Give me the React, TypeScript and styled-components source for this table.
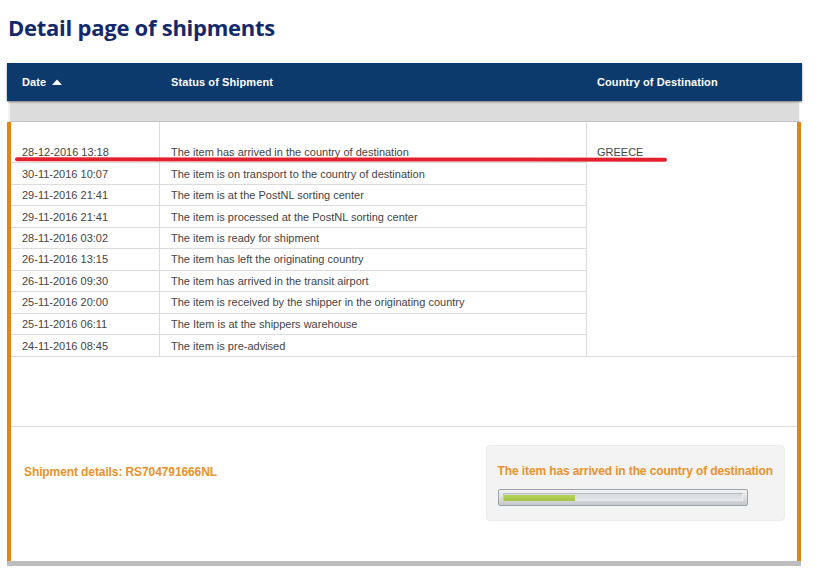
import React from 'react';
import styled, { createGlobalStyle } from 'styled-components';

const GlobalStyle = createGlobalStyle`
  html, body { margin: 0; padding: 0; background: #ffffff; }
  body { font-family: "Liberation Sans", Arial, sans-serif; }
  * { box-sizing: border-box; }
`;

const Page = styled.div`
  width: 815px;
  height: 579px;
  padding: 12px 0 0 7px;
  overflow: hidden;
`;

const Title = styled.h1`
  margin: 0 0 21px 1px;
  font-family: "Open Sans", "Noto Sans", sans-serif;
  font-weight: 700;
  font-size: 22px;
  line-height: 30px;
  color: #14296b;
  letter-spacing: -0.25px;
`;

const Frame = styled.div`
  width: 795px;
  display: flex;
  flex-direction: column;
`;

const HeaderBar = styled.div`
  display: grid;
  grid-template-columns: 152px 427px 1fr;
  align-items: center;
  height: 38px;
  background: #0c3a6c;
  box-shadow: 0 1px 2px rgba(0, 0, 0, 0.45);
  position: relative;
  z-index: 1;
`;

const HeaderCell = styled.div<{ $pad: number }>`
  display: flex;
  align-items: center;
  gap: 6px;
  padding-left: ${(p) => p.$pad}px;
  color: #ffffff;
  font-weight: 700;
  font-size: 11px;
  letter-spacing: 0.1px;
`;

const SortIcon = styled.svg`
  width: 10px;
  height: 6px;
  display: block;
`;

const Band = styled.div`
  height: 21px;
  margin: 0 2px 0 1px;
  background: #dcdcdc;
  border-left: 2px solid #f3f3f3;
  border-right: 1px solid #f6f6f6;
  border-bottom: 1px solid #c2c2c2;
`;

const Panel = styled.div`
  position: relative;
  width: 794px;
  border-left: 4px solid #e5831b;
  border-right: 4px solid #e5831b;
  display: flex;
  flex-direction: column;
`;

const TableBody = styled.div`
  display: flex;
  border-bottom: 1px solid #dcdcdc;
`;

const LeftColumns = styled.div`
  width: 575px;
  display: flex;
  flex-direction: column;
`;

const Row = styled.div<{ $spacer?: boolean }>`
  display: grid;
  grid-template-columns: 148px 1fr;
  height: ${(p) => (p.$spacer ? '20px' : '21.45px')};
  border-bottom: ${(p) => (p.$spacer ? 'none' : '1px solid #dcdcdc')};
  &:last-child { border-bottom: none; }
`;

const DateCell = styled.div`
  display: flex;
  align-items: center;
  padding-left: 11px;
  font-size: 11px;
  color: #444444;
  white-space: nowrap;
`;

const StatusCell = styled(DateCell)`
  border-left: 1px solid #dcdcdc;
`;

const CountryCell = styled.div`
  flex: 1;
  border-left: 1px solid #dcdcdc;
  padding: 20px 0 0 10px;
  font-size: 11px;
  color: #444444;
`;

const CountryText = styled.div`
  height: 20.5px;
  display: flex;
  align-items: center;
`;

const EmptyArea = styled.div`
  height: 70px;
  border-bottom: 1px solid #dcdcdc;
`;

const Details = styled.div`
  height: 134px;
  display: flex;
  justify-content: space-between;
  align-items: flex-start;
  padding: 18px 12px 0 13px;
`;

const ShipmentLabel = styled.div`
  margin-top: 20px;
  color: #e8922b;
  font-weight: 700;
  font-size: 12px;
  line-height: 14px;
  letter-spacing: -0.1px;
`;

const StatusBox = styled.div`
  border: 1px solid #ececec;
  border-radius: 4px;
  background: #f3f3f3;
  padding: 18px 11px 14px 11px;
`;

const StatusText = styled.div`
  color: #e8922b;
  font-weight: 700;
  font-size: 12px;
  line-height: 14px;
  letter-spacing: -0.12px;
  margin-bottom: 11px;
  white-space: nowrap;
`;

const Track = styled.div`
  width: 250px;
  height: 17px;
  border: 1px solid #9ea3a8;
  border-radius: 2px;
  background: linear-gradient(to bottom, #f2f3f4 0%, #d9dcdf 60%, #c4c8cc 100%);
  padding: 3px 4px 0 4px;
`;

const TrackInner = styled.div`
  height: 8px;
  border-top: 1px solid #b7bbbf;
  border-left: 1px solid #c3c6c9;
  border-right: 1px solid #eef0f1;
  background: linear-gradient(to bottom, #d9dcdf 0%, #e6e8ea 100%);
  padding-top: 1px;
`;

const Fill = styled.div`
  height: 6px;
  background: linear-gradient(to bottom, #b4d35a 0%, #a4c243 100%);
`;

const BottomBar = styled.div`
  width: 794px;
  height: 5px;
  background: #bdbdbd;
`;

const Annotation = styled.svg`
  position: absolute;
  left: 3px;
  top: 33px;
  width: 654px;
  height: 8px;
  pointer-events: none;
`;

const events: [string, string][] = [
  ['28-12-2016 13:18', 'The item has arrived in the country of destination'],
  ['30-11-2016 10:07', 'The item is on transport to the country of destination'],
  ['29-11-2016 21:41', 'The item is at the PostNL sorting center'],
  ['29-11-2016 21:41', 'The item is processed at the PostNL sorting center'],
  ['28-11-2016 03:02', 'The item is ready for shipment'],
  ['26-11-2016 13:15', 'The item has left the originating country'],
  ['26-11-2016 09:30', 'The item has arrived in the transit airport'],
  ['25-11-2016 20:00', 'The item is received by the shipper in the originating country'],
  ['25-11-2016 06:11', 'The Item is at the shippers warehouse'],
  ['24-11-2016 08:45', 'The item is pre-advised'],
];

export default function App() {
  const progress = 30;
  return (
    <Page>
      <GlobalStyle />
      <Title>Detail page of shipments</Title>
      <Frame>
        <HeaderBar>
          <HeaderCell $pad={15}>
            Date
            <SortIcon viewBox="0 0 10 6">
              <polygon points="0,6 5,0.5 10,6" fill="#ffffff" />
            </SortIcon>
          </HeaderCell>
          <HeaderCell $pad={12}>Status of Shipment</HeaderCell>
          <HeaderCell $pad={11}>Country of Destination</HeaderCell>
        </HeaderBar>
        <Band />
        <Panel>
          <TableBody>
            <LeftColumns>
              <Row $spacer>
                <DateCell />
                <StatusCell />
              </Row>
              {events.map(([date, status], i) => (
                <Row key={i}>
                  <DateCell>{date}</DateCell>
                  <StatusCell>{status}</StatusCell>
                </Row>
              ))}
            </LeftColumns>
            <CountryCell>
              <CountryText>GREECE</CountryText>
            </CountryCell>
          </TableBody>
          <EmptyArea />
          <Details>
            <ShipmentLabel>Shipment details: RS704791666NL</ShipmentLabel>
            <StatusBox>
              <StatusText>The item has arrived in the country of destination</StatusText>
              <Track>
                <TrackInner>
                  <Fill style={{ width: `${progress}%` }} />
                </TrackInner>
              </Track>
            </StatusBox>
          </Details>
          <Annotation viewBox="0 0 654 8">
            <path d="M3 4.2 L250 4.6 L500 4.4 L651 4.8" stroke="#e3202d" strokeWidth="4" strokeLinecap="round" fill="none" />
          </Annotation>
        </Panel>
        <BottomBar />
      </Frame>
    </Page>
  );
}
